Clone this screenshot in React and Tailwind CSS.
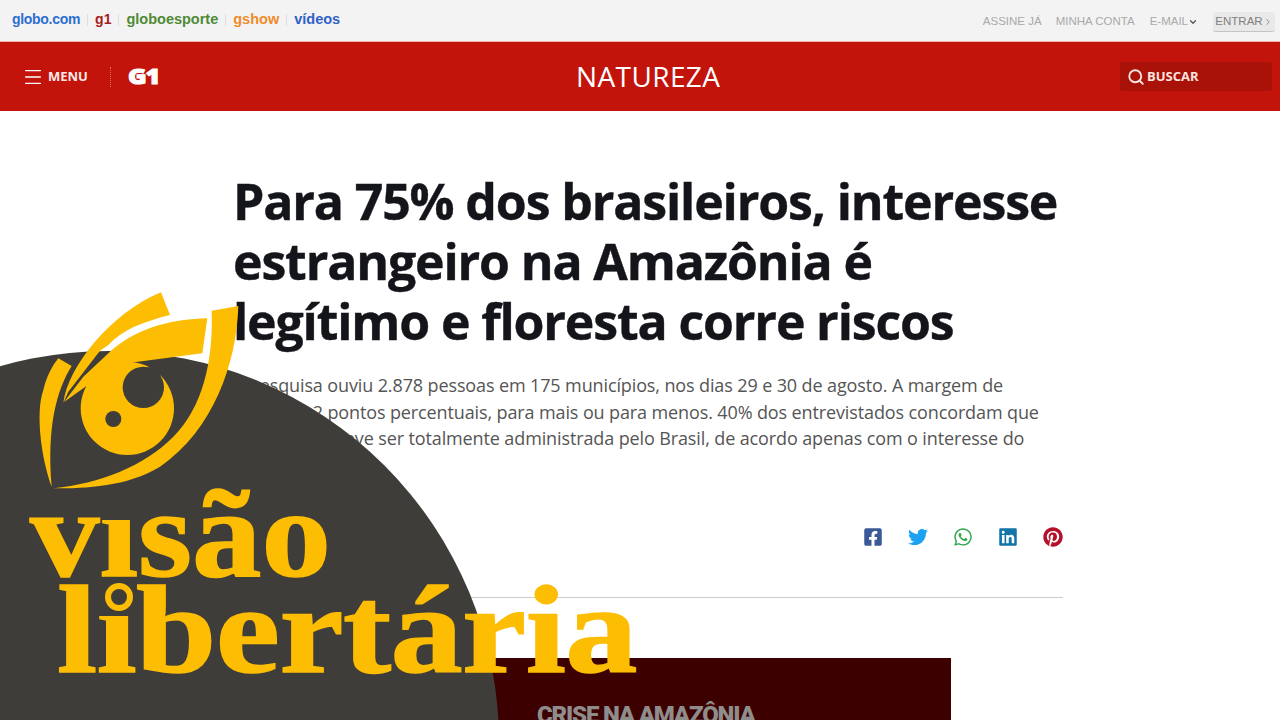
import { Menu, Search, ChevronDown, ChevronRight } from 'lucide-react';
import { FaFacebookSquare, FaTwitter, FaWhatsapp, FaLinkedin, FaPinterest } from 'react-icons/fa';

const globoLinks = [
  { label: 'globo.com', color: 'text-[#2a6fd0]', size: 'text-[14px] tracking-[-0.3px]' },
  { label: 'g1', color: 'text-[#a5201c]', size: 'text-[14px]' },
  { label: 'globoesporte', color: 'text-[#4f8a35]', size: 'text-[14.5px]' },
  { label: 'gshow', color: 'text-[#ee8c2c]', size: 'text-[14.5px]' },
  { label: 'vídeos', color: 'text-[#2f62c4]', size: 'text-[14.5px]' },
];

const shareIcons = [
  { Icon: FaFacebookSquare, color: 'text-[#3b5998]' },
  { Icon: FaTwitter, color: 'text-[#1da1f2]' },
  { Icon: FaWhatsapp, color: 'text-[#2fa84f]' },
  { Icon: FaLinkedin, color: 'text-[#1274a8]' },
  { Icon: FaPinterest, color: 'text-[#b5102a]' },
];

function TopBar() {
  return (
    <div className="flex h-[42px] items-center justify-between border-b border-[#f3b5a8] bg-[#f3f3f4] pl-3 pr-[5px] font-['Liberation_Sans',sans-serif]">
      <div className="flex items-center gap-[7px] pb-[2px] font-bold">
        {globoLinks.map((link, i) => (
          <div key={link.label} className="flex items-center gap-[7px]">
            {i > 0 && <span className="h-3 w-px bg-[#dddddd]" />}
            <span className={`${link.color} ${link.size}`}>{link.label}</span>
          </div>
        ))}
      </div>
      <div className="flex items-center pt-[3px] text-[11.5px] text-[#a9a9a9]">
        <span>ASSINE JÁ</span>
        <span className="ml-[14px]">MINHA CONTA</span>
        <span className="ml-[15px] flex items-center">
          E-MAIL
          <ChevronDown size={10} strokeWidth={3} className="text-[#555555]" />
        </span>
        <span className="ml-[15px] flex h-[20px] w-[62px] items-center justify-center rounded-[3px] border-b border-[#c4c4c4] bg-[#e9e9e9] text-[#808080]">
          ENTRAR
          <ChevronRight size={10} strokeWidth={2} />
        </span>
      </div>
    </div>
  );
}

function RedHeader() {
  return (
    <header className="relative flex h-[69px] items-center justify-between bg-[#c2140b] pl-[22px] pr-2 font-['Open_Sans',sans-serif] text-white">
      <div className="flex items-center">
        <Menu size={22} strokeWidth={1.5} />
        <span className="ml-[4px] text-[13px] font-bold text-[#fbeae8]">MENU</span>
        <span className="ml-[22px] h-[20px] border-l border-dotted border-[#e66a60]" />
        <span className="ml-[17px] origin-left scale-x-[1.2] text-[21px] leading-none font-extrabold tracking-[-1px] [-webkit-text-stroke:1px_white]">G1</span>
      </div>
      <span className="absolute left-[576px] -translate-y-px text-[28px] leading-none tracking-[0.4px]">NATUREZA</span>
      <div className="flex h-[29px] w-[152px] items-center rounded-[3px] bg-[#a81208] pl-[7px]">
        <Search size={18} strokeWidth={2.5} className="text-[#fbe3df]" />
        <span className="ml-[2px] text-[13px] font-bold text-[#fbe3df]">BUSCAR</span>
      </div>
    </header>
  );
}

function Article() {
  return (
    <main className="ml-[233px] w-[830px] font-['Open_Sans',sans-serif]">
      <h1 className="mt-[60px] text-[50px] leading-[60px] font-bold tracking-[-1.15px] whitespace-nowrap text-[#14151a] [-webkit-text-stroke:0.4px_#14151a]">
        Para 75% dos brasileiros, interesse
        <br />
        estrangeiro na Amazônia é
        <br />
        legítimo e floresta corre riscos
      </h1>
      <p className="mt-[21px] text-[18px] leading-[26.5px] tracking-[-0.12px] whitespace-nowrap text-[#555555]">
        A pesquisa ouviu 2.878 pessoas em 175 municípios, nos dias 29 e 30 de agosto. A margem de
        <br />
        erro é de 2 pontos percentuais, para mais ou para menos. 40% dos entrevistados concordam que
        <br />
        a Amazônia deve ser totalmente administrada pelo Brasil, de acordo apenas com o interesse do
      </p>
      <div className="mt-[75px] flex justify-end gap-[25px]">
        {shareIcons.map(({ Icon, color }, i) => (
          <Icon key={i} size={20} className={color} />
        ))}
      </div>
      <hr className="mt-[50px] border-[#cccccc]" />
      <div className="mt-[60px] h-[62px] w-[718px] overflow-hidden bg-[#3d0000] pt-[45px] pl-[304px] font-['Roboto',sans-serif] text-[24px] leading-6 font-black tracking-[-1.2px] whitespace-nowrap text-[#8f8c8c]">
        CRISE NA AMAZÔNIA
      </div>
    </main>
  );
}

function EyeLogo() {
  return (
    <svg viewBox="0 0 1020 660" className="absolute top-[280px] left-0 h-[220px] w-[340px]">
      <g fill="#fdbd02">
        <path d="M190 368C205 260 330 100 483 37L510 105C430 125 365 150 325 195L300 212L205 335Z" />
        <path d="M622 115L607 220L380 250L268 312L192 366L250 290L338 208C420 140 520 118 622 115Z" />
        <circle cx="382" cy="385" r="140" />
        <path d="M635 92L715 78C710 250 640 450 480 560C380 620 260 625 160 625C300 610 430 560 520 470C610 380 640 240 635 92Z" />
        <path d="M175 235L215 258C170 330 140 440 155 620C125 540 105 400 130 330C140 290 155 260 175 235Z" />
      </g>
      <g fill="#3f3d3a">
        <circle cx="430" cy="322" r="62" />
        <circle cx="340" cy="417" r="24" />
        <path d="M440 262L480 262L482 288L470 280Z" />
      </g>
    </svg>
  );
}

function Brand() {
  return (
    <div className="absolute inset-0 overflow-hidden font-['Liberation_Serif',serif] leading-none font-bold text-[#fdbd02] [-webkit-text-stroke:1.5px_#fdbd02]">
      <div className="absolute top-[473px] left-[30px] origin-left scale-x-[1.12] text-[124px] whitespace-nowrap">
        v<span className="inline-block [clip-path:inset(38%_0_0_0)]">i</span>são
      </div>
      <div className="absolute top-[569px] left-[57px] origin-left scale-x-[1.165] text-[124px] tracking-[-0.5px] whitespace-nowrap">
        l<span className="inline-block [clip-path:inset(38%_0_0_0)]">i</span>bertária
      </div>
      <span className="absolute top-[583px] left-[105px] size-[28px] rounded-full border-[6px] border-[#fdbd02]" />
    </div>
  );
}

export default function App() {
  return (
    <div className="relative h-[720px] w-[1280px] overflow-hidden bg-white">
      <TopBar />
      <RedHeader />
      <Article />
      <div className="absolute top-[351px] left-[-283px] size-[782px] rounded-full bg-[#3f3d3a]" />
      <EyeLogo />
      <Brand />
    </div>
  );
}
